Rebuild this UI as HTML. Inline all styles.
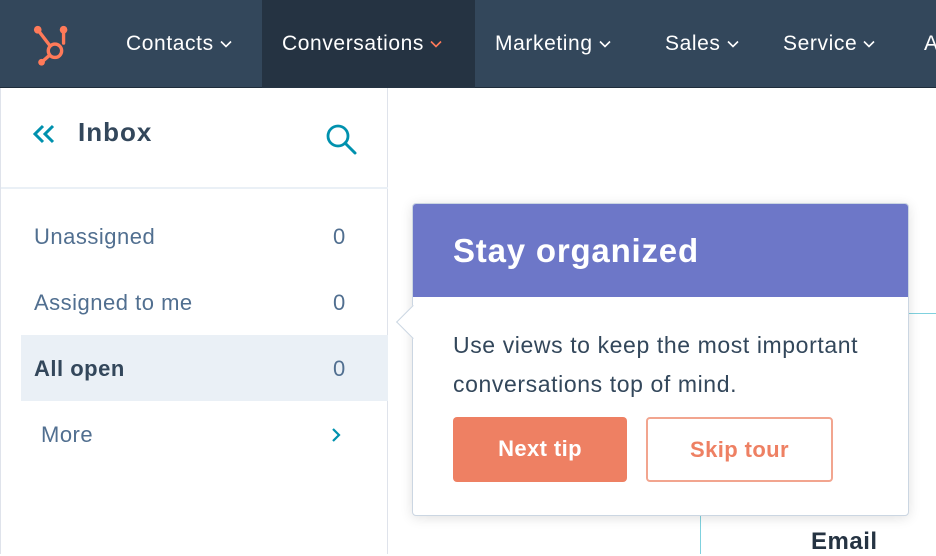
<!DOCTYPE html>
<html><head><meta charset="utf-8"><style>
*{margin:0;padding:0;box-sizing:border-box}
body{width:936px;height:554px;overflow:hidden;background:#fff;font-family:"Liberation Sans",sans-serif;position:relative;color:#33475b}
.nav{position:absolute;left:0;top:0;width:936px;height:88px;background:#33475b;border-bottom:1px solid #1f2d3b}
.nav .act{position:absolute;left:262px;top:0;width:213px;height:88px;background:#253342}
.ni{position:absolute;top:32px;color:#fff;font-size:21px;letter-spacing:.6px;white-space:nowrap}
.ni svg{margin-left:6px;vertical-align:middle}
.side{position:absolute;left:0;top:88px;width:388px;height:466px;border-right:1px solid #dfe3eb;border-left:1px solid #dfe3eb}
.hdr{position:absolute;left:0;top:0;width:387px;height:101px;border-bottom:2px solid #eaf0f6}
.row{position:absolute;left:20px;width:367px;height:66px;font-size:22px;letter-spacing:.5px;color:#516f90}
.row .l{position:absolute;left:13px;top:21px}
.row .r{position:absolute;left:312px;top:21px}
.pop{position:absolute;left:412px;top:203px;width:497px;height:313px;background:#fff;border:1px solid #cbd6e2;border-radius:4px;box-shadow:0 2px 12px rgba(0,0,0,.12)}
.ph{height:93px;background:#6d77c8;border-radius:3px 3px 0 0;color:#fff;font-weight:bold;font-size:33px;letter-spacing:.8px;padding:28px 0 0 40px}
.pb{position:absolute;left:40px;top:122px;font-size:23px;letter-spacing:.6px;line-height:39px;color:#33475b;white-space:nowrap}
.btn{position:absolute;top:213px;height:65px;border-radius:4px;font-weight:bold;font-size:22px;letter-spacing:.4px;text-align:center;line-height:63px}
</style></head><body>
<div class="nav"><div class="act"></div>
<svg style="position:absolute;left:32px;top:24px" width="44" height="44" viewBox="0 0 46 46"><g stroke="#ff7a59" stroke-width="3.5" fill="none" stroke-linecap="round"><circle cx="24" cy="28" r="7"/><line x1="6" y1="6" x2="19" y2="23"/><line x1="33" y1="6" x2="33" y2="20"/><line x1="18" y1="33" x2="10" y2="40"/></g><g fill="#ff7a59"><circle cx="6" cy="6" r="4"/><circle cx="33" cy="6" r="4"/><circle cx="10" cy="40" r="3.5"/></g></svg>
<div class="ni" style="left:126px">Contacts<svg width="12" height="8" viewBox="0 0 12 8"><path d="M1 1.5l5 5 5-5" stroke="#fff" stroke-width="1.6" fill="none"/></svg></div>
<div class="ni" style="left:282px">Conversations<svg width="12" height="8" viewBox="0 0 12 8"><path d="M1 1.5l5 5 5-5" stroke="#ff7a59" stroke-width="1.6" fill="none"/></svg></div>
<div class="ni" style="left:495px">Marketing<svg width="12" height="8" viewBox="0 0 12 8"><path d="M1 1.5l5 5 5-5" stroke="#fff" stroke-width="1.6" fill="none"/></svg></div>
<div class="ni" style="left:665px">Sales<svg width="12" height="8" viewBox="0 0 12 8"><path d="M1 1.5l5 5 5-5" stroke="#fff" stroke-width="1.6" fill="none"/></svg></div>
<div class="ni" style="left:783px">Service<svg width="12" height="8" viewBox="0 0 12 8"><path d="M1 1.5l5 5 5-5" stroke="#fff" stroke-width="1.6" fill="none"/></svg></div>
<div class="ni" style="left:924px">A</div>
</div>
<div class="side">
<div class="hdr">
<svg style="position:absolute;left:32px;top:36px" width="24" height="20" viewBox="0 0 24 20"><path d="M10 2L2 10l8 8M20 2l-8 8 8 8" stroke="#0091ae" stroke-width="3" fill="none"/></svg>
<div style="position:absolute;left:77px;top:29px;font-size:26px;letter-spacing:1px;font-weight:bold;color:#33475b">Inbox</div>
<svg style="position:absolute;left:322px;top:34px" width="36" height="36" viewBox="0 0 36 36"><circle cx="15" cy="14" r="10" stroke="#0091ae" stroke-width="2.8" fill="none"/><line x1="22" y1="21" x2="32" y2="31" stroke="#0091ae" stroke-width="3" stroke-linecap="round"/></svg>
</div>
<div class="row" style="top:115px"><span class="l">Unassigned</span><span class="r">0</span></div>
<div class="row" style="top:181px"><span class="l">Assigned to me</span><span class="r">0</span></div>
<div class="row" style="top:247px;background:#eaf0f6"><span class="l" style="font-weight:bold;color:#33475b">All open</span><span class="r">0</span></div>
<div class="row" style="top:313px"><span class="l" style="left:20px">More</span><svg style="position:absolute;left:310px;top:26px" width="10" height="16" viewBox="0 0 10 16"><path d="M2 2l6 6-6 6" stroke="#0091ae" stroke-width="2.2" fill="none"/></svg></div>
</div>
<div style="position:absolute;left:700px;top:480px;width:1px;height:74px;background:#7fd1de"></div>
<div style="position:absolute;left:908px;top:313px;width:28px;height:1px;background:#7fd1de"></div>
<div style="position:absolute;left:811px;top:528px;font-size:24px;letter-spacing:.5px;font-weight:bold;color:#253342">Email</div>
<div class="pop">
<div class="ph">Stay organized</div>
<div class="pb">Use views to keep the most important<br>conversations top of mind.</div>
<div class="btn" style="left:40px;width:174px;background:#ee8063;color:#fff">Next tip</div>
<div class="btn" style="left:233px;width:187px;border:2px solid #f2a58f;color:#ee8063;line-height:61px">Skip tour</div>
</div>
<div style="position:absolute;left:401px;top:310px;width:24px;height:24px;background:#fff;transform:rotate(45deg);border-left:1px solid #cbd6e2;border-bottom:1px solid #cbd6e2"></div>
</body></html>
